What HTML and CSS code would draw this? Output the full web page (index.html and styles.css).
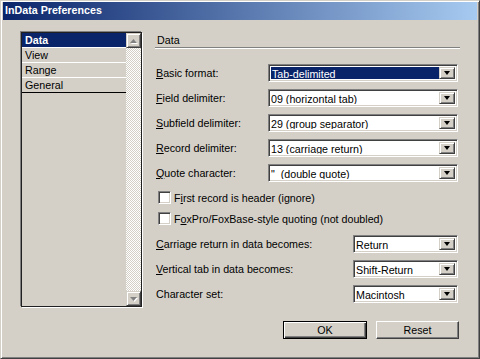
FILE: index.html
```html
<!DOCTYPE html>
<html lang="en">
<head>
    <meta charset="UTF-8">
    <title>InData Preferences</title>
    <link rel="stylesheet" href="styles.css">
</head>
<body>

    <div class="window">
        <!-- Title Bar -->
        <div class="titlebar">InData Preferences</div>

        <div class="content">
            <!-- Category list -->
            <div class="listbox">
                <div class="items">
                    <div class="item selected">Data</div>
                    <div class="item">View</div>
                    <div class="item">Range</div>
                    <div class="item last">General</div>
                </div>
                <div class="scrollbar">
                    <div class="scroll-btn">
                        <svg width="7" height="4" viewBox="0 0 7 4"><path d="M3.5 0 L7 4 L0 4 Z" fill="#808080"/></svg>
                    </div>
                    <div class="scroll-track"></div>
                    <div class="scroll-btn">
                        <svg width="7" height="4" viewBox="0 0 7 4"><path d="M0 0 L7 0 L3.5 4 Z" fill="#808080"/></svg>
                    </div>
                </div>
            </div>

            <!-- Data panel -->
            <div class="panel">
                <div class="panel-title">Data</div>

                <div class="form-row first-row">
                    <label class="label"><u>B</u>asic format:</label>
                    <div class="combo wide focused">
                        <div class="combo-text">Tab-delimited</div>
                        <div class="combo-btn"><span class="arrow"></span></div>
                    </div>
                </div>
                <div class="form-row">
                    <label class="label"><u>F</u>ield delimiter:</label>
                    <div class="combo wide">
                        <div class="combo-text">09 (horizontal tab)</div>
                        <div class="combo-btn"><span class="arrow"></span></div>
                    </div>
                </div>
                <div class="form-row">
                    <label class="label"><u>S</u>ubfield delimiter:</label>
                    <div class="combo wide">
                        <div class="combo-text">29 (group separator)</div>
                        <div class="combo-btn"><span class="arrow"></span></div>
                    </div>
                </div>
                <div class="form-row">
                    <label class="label"><u>R</u>ecord delimiter:</label>
                    <div class="combo wide">
                        <div class="combo-text">13 (carriage return)</div>
                        <div class="combo-btn"><span class="arrow"></span></div>
                    </div>
                </div>
                <div class="form-row">
                    <label class="label"><u>Q</u>uote character:</label>
                    <div class="combo wide">
                        <div class="combo-text">"&nbsp;&nbsp;(double quote)</div>
                        <div class="combo-btn"><span class="arrow"></span></div>
                    </div>
                </div>

                <div class="check-row">
                    <span class="checkbox"></span>
                    <span>F<u>i</u>rst record is header (ignore)</span>
                </div>
                <div class="check-row">
                    <span class="checkbox"></span>
                    <span>F<u>o</u>xPro/FoxBase-style quoting (not doubled)</span>
                </div>

                <div class="form-row lower first-lower">
                    <label class="label"><u>C</u>arriage return in data becomes:</label>
                    <div class="combo narrow">
                        <div class="combo-text">Return</div>
                        <div class="combo-btn"><span class="arrow"></span></div>
                    </div>
                </div>
                <div class="form-row lower">
                    <label class="label"><u>V</u>ertical tab in data becomes:</label>
                    <div class="combo narrow">
                        <div class="combo-text">Shift-Return</div>
                        <div class="combo-btn"><span class="arrow"></span></div>
                    </div>
                </div>
                <div class="form-row lower">
                    <label class="label">Character set:</label>
                    <div class="combo narrow">
                        <div class="combo-text">Macintosh</div>
                        <div class="combo-btn"><span class="arrow"></span></div>
                    </div>
                </div>

                <div class="buttons">
                    <button class="btn default">OK</button>
                    <button class="btn">Reset</button>
                </div>
            </div>
        </div>
    </div>

</body>
</html>
```

FILE: styles.css
```css
/* Global Styles */
body {
    margin: 0;
    font-family: 'Liberation Sans', Arial, sans-serif;
    font-size: 10.7px;
    color: #000;
    background-color: #d4d0c8;
}

.window {
    width: 480px;
    height: 359px;
    box-sizing: border-box;
    background-color: #d4d0c8;
    border: 1px solid;
    border-color: #d4d0c8 #404040 #404040 #d4d0c8;
    box-shadow: inset 1px 1px #fff, inset -1px -1px #808080;
    padding: 1px 2px 2px 2px;
}

.titlebar {
    height: 18px;
    line-height: 17px;
    padding-left: 2px;
    background: linear-gradient(to right, #0a246a, #a6caf0);
    color: #fff;
    font-weight: bold;
    font-size: 10.7px;
}

.content {
    display: flex;
    padding: 12px 0 0 18px;
}

/* Category list */
.listbox {
    display: flex;
    width: 121px;
    height: 275px;
    box-sizing: border-box;
    border: 1px solid #202020;
    box-shadow: -1px -1px #808080, 1px 1px #fff;
}

.items {
    flex: 1;
}

.item {
    height: 14px;
    line-height: 14px;
    padding-left: 3px;
    border-bottom: 1px solid #fff;
}

.item.selected {
    background-color: #0a246a;
    color: #fff;
    font-weight: bold;
}

.item.last {
    border-bottom-color: #000;
}

.scrollbar {
    width: 15px;
    display: flex;
    flex-direction: column;
}

.scroll-btn {
    height: 15px;
    box-sizing: border-box;
    border: 1px solid;
    border-color: #d4d0c8 #404040 #404040 #d4d0c8;
    box-shadow: inset 1px 1px #fff, inset -1px -1px #808080;
    display: flex;
    justify-content: center;
    align-items: center;
}

.scroll-btn svg {
    filter: drop-shadow(1px 1px 0 #fff);
}

.scroll-track {
    flex: 1;
    background: repeating-conic-gradient(#fff 0 25%, #d4d0c8 0 50%) 0 0 / 2px 2px;
}

/* Data panel */
.panel {
    margin-left: 13px;
    width: 305px;
}

.panel-title {
    height: 14px;
    line-height: 14px;
    padding: 1px 0 0 2px;
    border-bottom: 1px solid #808080;
    box-shadow: 0 1px #fff;
}

.form-row {
    display: flex;
    align-items: center;
    height: 18px;
    margin-top: 7px;
}

.form-row.first-row {
    margin-top: 16px;
}

.label {
    padding-left: 1px;
    width: 112px;
}

.form-row.lower .label {
    width: 197px;
}

.form-row.first-lower {
    margin-top: 10px;
}

.combo {
    display: flex;
    height: 18px;
    box-sizing: border-box;
    border: 1px solid;
    border-color: #808080 #fff #fff #808080;
    box-shadow: inset 1px 1px #404040, inset -1px -1px #d4d0c8;
    background-color: #fff;
    padding: 2px;
}

.combo.wide {
    width: 190px;
}

.combo.narrow {
    width: 105px;
}

.combo-text {
    flex: 1;
    line-height: 14px;
    padding-left: 0;
    white-space: nowrap;
    overflow: hidden;
}

.combo.focused .combo-text {
    background-color: #0a246a;
    color: #fff;
    padding-left: 1px;
}

.combo-btn {
    width: 16px;
    box-sizing: border-box;
    background-color: #d4d0c8;
    border: 1px solid;
    border-color: #d4d0c8 #404040 #404040 #d4d0c8;
    box-shadow: inset 1px 1px #fff, inset -1px -1px #808080;
    display: flex;
    justify-content: center;
    align-items: center;
}

.arrow {
    width: 0;
    height: 0;
    border-left: 3.5px solid transparent;
    border-right: 3.5px solid transparent;
    border-top: 4px solid #000;
}

.check-row {
    display: flex;
    align-items: center;
    height: 13px;
    margin-top: 9px;
    padding-left: 3px;
    gap: 3px;
}

.check-row + .check-row {
    margin-top: 8px;
}

.checkbox {
    width: 13px;
    height: 13px;
    box-sizing: border-box;
    background-color: #fff;
    border: 1px solid;
    border-color: #808080 #fff #fff #808080;
    box-shadow: inset 1px 1px #404040, inset -1px -1px #d4d0c8;
}

.buttons {
    display: flex;
    justify-content: flex-end;
    gap: 9px;
    margin-top: 18px;
    padding-right: 1px;
}

.btn {
    width: 83px;
    height: 18px;
    box-sizing: border-box;
    font-family: inherit;
    font-size: 10.7px;
    color: #000;
    background-color: #d4d0c8;
    border: 1px solid;
    border-color: #fff #404040 #404040 #fff;
    box-shadow: inset -1px -1px #808080;
    padding: 0;
}

.btn.default {
    width: 84px;
    border-color: #000;
    box-shadow: inset 1px 1px #fff, inset -1px -1px #404040, inset -2px -2px #808080;
}
```
